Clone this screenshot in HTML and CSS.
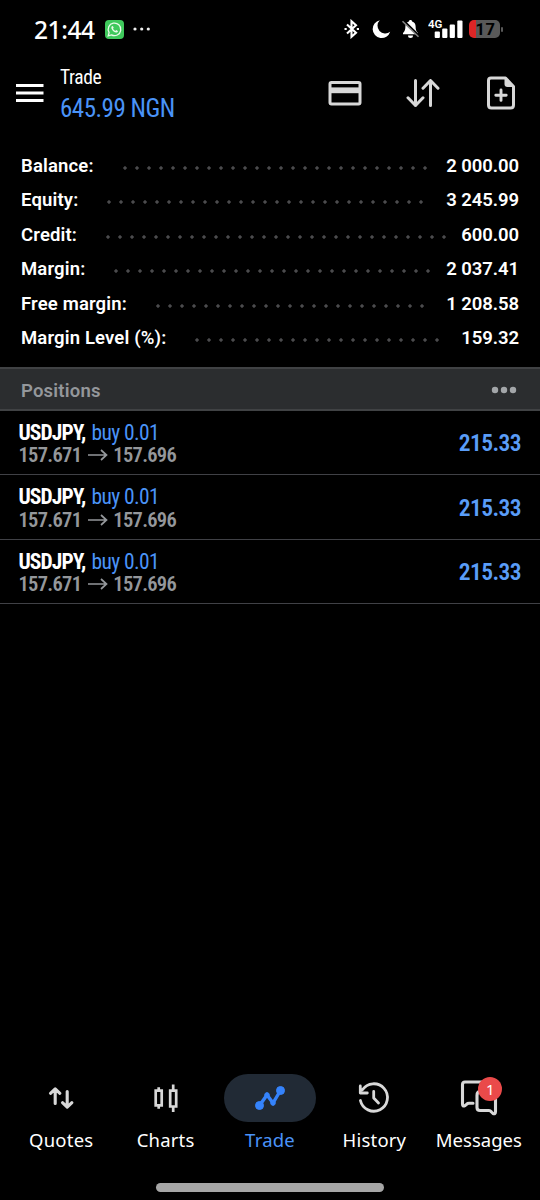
FILE: index.html
```html
<!DOCTYPE html>
<html lang="en">
<head>
    <meta charset="UTF-8">
    <meta name="viewport" content="width=device-width, initial-scale=1.0">
    <title>Trade</title>
    <link rel="stylesheet" href="styles.css">
</head>
<body>

    <div class="status-bar">
        <span class="time">21:44</span>
        <svg class="whatsapp" width="19" height="19" viewBox="0 0 19 19">
            <rect width="19" height="19" rx="4" fill="#3fc95c"/>
            <path d="M3.2 15.9l.9-3.3a6.3 6.3 0 1 1 2.4 2.3z" fill="none" stroke="#e9fbe9" stroke-width="1.3"/>
            <path d="M6.800 6.300q.8-.8 1.300.2l.6 1.300-.7.9q.8 1.500 2.300 2.200l.9-.8 1.300.6q.9.500.1 1.300-1.500 1.400-4.300-.8-3-2.800-1.500-4.900z" fill="#e9fbe9"/>
        </svg>
        <svg class="more" width="18" height="4" viewBox="0 0 18 4" fill="#eee">
            <circle cx="2" cy="2" r="1.600"/><circle cx="8.700" cy="2" r="1.600"/><circle cx="15.300" cy="2" r="1.600"/>
        </svg>
        <div class="status-icons">
            <svg width="16" height="20" viewBox="0 0 16 20" fill="none" stroke="#fff" stroke-width="2.100">
                <path d="M3 5.500l9 8.300-4.500 4V2.200l4.500 4-9 8.300"/>
                <path d="M.5 10h2.200M12.800 10H15"/>
            </svg>
            <svg width="19" height="20" viewBox="0 0 19 20">
                <path d="M7.800 1.200A9 9 0 1 0 18.200 12.800 7.800 7.800 0 0 1 7.800 1.200z" fill="#fff"/>
            </svg>
            <svg width="19" height="20" viewBox="0 0 19 20">
                <path d="M9.500 1c1 0 1.600.6 1.600 1.500 2.300.7 3.500 2.400 3.500 4.800 0 3.500.6 5 2.400 6.700v1.200H2V14c1.700-1.700 2.400-3.200 2.400-6.700 0-2.400 1.200-4.100 3.500-4.800C7.900 1.600 8.500 1 9.500 1zM7 16.500h5a2.500 2.500 0 0 1-5 0z" fill="#fff"/>
                <path d="M2.500 1.500l15.800 15.500" stroke="#000" stroke-width="2.200"/>
                <path d="M1.500 2.200l16 15.600" stroke="#888" stroke-width="1.500"/>
            </svg>
            <svg width="36" height="20" viewBox="0 0 36 20" fill="#fff">
                <text class="net" x="0" y="9">4G</text>
                <rect x="6.700" y="12.500" width="5.200" height="6.500" rx="1"/>
                <rect x="14.200" y="9.500" width="5.200" height="9.500" rx="1"/>
                <rect x="21.700" y="5.500" width="5.200" height="13.500" rx="1"/>
                <rect x="29.300" y="1.500" width="5.200" height="17.500" rx="1"/>
            </svg>
            <div class="battery"><span>17</span></div>
        </div>
    </div>

    <div class="header">
        <svg class="menu" width="28" height="20" viewBox="0 0 28 20" fill="#fff">
            <rect y="1" width="27.500" height="3"/><rect y="8.500" width="27.500" height="3"/><rect y="16" width="27.500" height="3"/>
        </svg>
        <div class="title">
            <span class="title-name condensed">Trade</span>
            <span class="title-sum condensed">645.99 NGN</span>
        </div>
        <div class="actions">
            <svg width="34" height="34" viewBox="0 0 34 34">
                <rect x="2" y="6.500" width="30" height="21.500" rx="1.500" fill="none" stroke="#d8d8d8" stroke-width="3"/>
                <path d="M2 14.300h30" stroke="#d8d8d8" stroke-width="5.800"/>
            </svg>
            <svg width="34" height="34" viewBox="0 0 34 34" fill="none" stroke="#d8d8d8" stroke-width="3" stroke-linecap="round" stroke-linejoin="round">
                <path d="M9.500 4.500v25M2 21.800l7.500 7.700 7.500-7.700M24.500 29.500v-25M17 12.200l7.500-7.700 7.500 7.700"/>
            </svg>
            <svg width="34" height="34" viewBox="0 0 34 34">
                <path d="M7 2h14.500l8 8.500v18.500q0 3-3 3H7.500q-3 0-3-3V4.500q0-2.500 2.500-2.500z" fill="none" stroke="#d8d8d8" stroke-width="3" stroke-linejoin="round"/>
                <path d="M20.500 1.500L30 11H23.500q-3 0-3-3z" fill="#d8d8d8"/>
                <path d="M17 14v10.400M11.800 19.200h10.400" stroke="#d8d8d8" stroke-width="2.900" stroke-linecap="round"/>
            </svg>
        </div>
    </div>

    <div class="summary">
        <div class="line"><span>Balance:</span><i class="dots" style="--n: 26"></i><b>2 000.00</b></div>
        <div class="line"><span>Equity:</span><i class="dots" style="--n: 27"></i><b>3 245.99</b></div>
        <div class="line"><span>Credit:</span><i class="dots" style="--n: 29"></i><b>600.00</b></div>
        <div class="line"><span>Margin:</span><i class="dots" style="--n: 27"></i><b>2 037.41</b></div>
        <div class="line"><span>Free margin:</span><i class="dots" style="--n: 23"></i><b>1 208.58</b></div>
        <div class="line"><span>Margin Level (%):</span><i class="dots" style="--n: 21"></i><b>159.32</b></div>
    </div>

    <div class="section">
        <span>Positions</span>
        <svg width="26" height="8" viewBox="0 0 26 8" fill="#a3a6a9">
            <circle cx="4" cy="4" r="3.200"/><circle cx="13" cy="4" r="3.200"/><circle cx="22" cy="4" r="3.200"/>
        </svg>
    </div>

    <div class="positions">
        <div class="position">
            <div class="deal">
                <div class="symbol"><b class="condensed">USDJPY,</b><span class="condensed">buy 0.01</span></div>
                <div class="prices">
                    <span class="condensed">157.671</span>
                    <svg width="20" height="12" viewBox="0 0 20 12" fill="none" stroke="#94979b" stroke-width="1.700"><path d="M0 6h18.500M13 1l5.500 5-5.500 5"/></svg>
                    <span class="condensed">157.696</span>
                </div>
            </div>
            <div class="profit condensed">215.33</div>
        </div>
        <div class="position">
            <div class="deal">
                <div class="symbol"><b class="condensed">USDJPY,</b><span class="condensed">buy 0.01</span></div>
                <div class="prices">
                    <span class="condensed">157.671</span>
                    <svg width="20" height="12" viewBox="0 0 20 12" fill="none" stroke="#94979b" stroke-width="1.700"><path d="M0 6h18.500M13 1l5.500 5-5.500 5"/></svg>
                    <span class="condensed">157.696</span>
                </div>
            </div>
            <div class="profit condensed">215.33</div>
        </div>
        <div class="position">
            <div class="deal">
                <div class="symbol"><b class="condensed">USDJPY,</b><span class="condensed">buy 0.01</span></div>
                <div class="prices">
                    <span class="condensed">157.671</span>
                    <svg width="20" height="12" viewBox="0 0 20 12" fill="none" stroke="#94979b" stroke-width="1.700"><path d="M0 6h18.500M13 1l5.500 5-5.500 5"/></svg>
                    <span class="condensed">157.696</span>
                </div>
            </div>
            <div class="profit condensed">215.33</div>
        </div>
    </div>

    <div class="nav">
        <div class="tab">
            <div class="tab-icon">
                <svg width="40" height="40" viewBox="0 0 40 40" fill="none" stroke="#d8d8d8" stroke-width="3.100" stroke-linecap="round" stroke-linejoin="round">
                    <path d="M14.200 25.500V11M9.500 15.300l4.700-4.500 4.700 4.500M26.200 13.500v15M21.500 24.700l4.700 4.500 4.700-4.500"/>
                </svg>
            </div>
            <span>Quotes</span>
        </div>
        <div class="tab">
            <div class="tab-icon">
                <svg width="40" height="40" viewBox="0 0 40 40" fill="none" stroke="#d8d8d8" stroke-width="2.700">
                    <path d="M9.700 12.700h6v14.600h-6zM12.700 9.300v3.400M12.700 27.300v3.400M24.200 12.700h6v15.800h-6zM27.200 6.500v6M27.200 28.500v5.500"/>
                </svg>
            </div>
            <span>Charts</span>
        </div>
        <div class="tab active">
            <div class="tab-icon">
                <svg width="40" height="40" viewBox="0 0 40 40" fill="#3583fb" stroke="#3583fb">
                    <path d="M9.500 27.500l7.500-10.500 6 8 7.500-12.500" fill="none" stroke-width="3.400"/>
                    <circle cx="9.500" cy="27.500" r="4"/><circle cx="17" cy="17" r="2.300"/><circle cx="23" cy="25" r="2.300"/><circle cx="30.500" cy="12.500" r="4"/>
                </svg>
            </div>
            <span>Trade</span>
        </div>
        <div class="tab">
            <div class="tab-icon">
                <svg width="40" height="40" viewBox="0 0 40 40" fill="none" stroke="#d8d8d8" stroke-width="2.800" stroke-linecap="round" stroke-linejoin="round">
                    <path d="M6.400 22.500a13.700 13.700 0 1 0 2-10.700M6.300 8v7h7M19.700 13.500v6.500l4.800 5"/>
                </svg>
            </div>
            <span>History</span>
        </div>
        <div class="tab">
            <div class="tab-icon">
                <svg width="40" height="40" viewBox="0 0 40 40" fill="none" stroke="#d8d8d8" stroke-width="3.100" stroke-linecap="round" stroke-linejoin="round">
                    <path d="M14 25.300h-4q-1.500 0-2.500 1l-1.500 1.300q-2.500 1.200-2.500-1.500V6.500q0-2.500 2.500-2.500h24"/>
                    <path d="M21 13.500h13.500q2 0 2 2v18q0 3-2.500 2l-1.500-1.500q-1.200-1.500-2.500-1.500h-9q-3 0-3-3V17.500q0-4 3-4z"/>
                </svg>
                <div class="badge">1</div>
            </div>
            <span>Messages</span>
        </div>
    </div>
    <div class="home-bar"></div>

</body>
</html>
```
FILE: styles.css
```css
* {
    box-sizing: border-box;
}

body {
    margin: 0;
    height: 1200px;
    background: #000;
    color: #fff;
    font-family: Roboto, "Liberation Sans", sans-serif;
    display: flex;
    flex-direction: column;
    overflow: hidden;
}

svg {
    display: block;
    flex: none;
}

.condensed {
    white-space: nowrap;
    font-stretch: 75%;
}

/* status bar */
.status-bar {
    height: 58px;
    padding-left: 34px;
    display: flex;
    align-items: center;
}

.time {
    font-family: "Noto Sans", sans-serif;
    font-size: 24.5px;
    font-weight: 500;
    letter-spacing: -0.4px;
    width: 71px;
}

.more {
    margin-left: 9px;
}

.status-icons {
    margin-left: auto;
    padding-right: 40px;
    display: flex;
    align-items: center;
}

.status-icons svg:nth-child(1) {
    margin-right: 12px;
}

.status-icons svg:nth-child(2) {
    margin-right: 10px;
}

.status-icons svg:nth-child(3) {
    margin-right: 8px;
}

.status-icons svg:nth-child(4) {
    margin-right: 5px;
}

.net {
    font-size: 11.5px;
    font-weight: 600;
}

.battery {
    position: relative;
    width: 31px;
    height: 18px;
    border-radius: 5px;
    background: linear-gradient(to right, #dc2626 7px, #595959 7px);
    color: #000;
    font-size: 16.5px;
    font-weight: 700;
    line-height: 19px;
    text-align: center;
    letter-spacing: 0.5px;
    padding-left: 2px;
}

.battery::after {
    content: "";
    position: absolute;
    right: -3px;
    top: 7px;
    width: 2px;
    height: 5px;
    border-radius: 1px;
    background: #595959;
}

/* header */
.header {
    height: 70px;
    padding: 0 22px 0 16px;
    display: flex;
    align-items: center;
}

.menu {
    margin-right: 16px;
}

.title {
    display: flex;
    flex-direction: column;
    align-items: flex-start;
    width: 150px;
    height: 58px;
}

.title-name {
    font-size: 19.5px;
    line-height: 27px;
    letter-spacing: -0.4px;
}

.title-sum {
    font-size: 25px;
    line-height: 35px;
    letter-spacing: -0.5px;
    color: #4a93f8;
}

.actions {
    margin-left: auto;
    display: flex;
    gap: 44px;
}

/* account summary */
.summary {
    padding: 20px 21px 0;
    height: 239px;
}

.line {
    height: 34.5px;
    padding-top: 0.5px;
    display: flex;
    align-items: center;
    font-size: 18.5px;
    font-weight: 600;
    letter-spacing: 0.15px;
    white-space: nowrap;
}

.line b {
    margin-left: auto;
    font-weight: 600;
    letter-spacing: -0.05px;
}

.dots {
    width: calc(var(--n) * 12px);
    height: 12px;
    margin: 4px 0 0 25px;
    background: radial-gradient(circle, #4b4b4d 1.300px, transparent 2.100px) 0 0 / 12px 12px;
}

/* positions */
.section {
    height: 44px;
    padding: 1px 23px 0 21px;
    display: flex;
    align-items: center;
    justify-content: space-between;
    background: #2b2d2f;
    border-top: 2px solid #404244;
    border-bottom: 2px solid #404244;
    color: #94979b;
    font-size: 18.5px;
    font-weight: 600;
    letter-spacing: 0.2px;
}

.section span {
    padding-top: 2px;
}

.position {
    height: 64.4px;
    padding: 1px 19px 0 18.5px;
    display: flex;
    align-items: center;
    justify-content: space-between;
    border-bottom: 1.5px solid #404146;
}

.deal {
    padding-top: 2px;
}

.symbol,
.prices {
    display: flex;
    align-items: center;
    height: 22.5px;
    line-height: 22px;
}

.symbol {
    font-size: 21.5px;
}

.symbol b {
    width: 73px;
    letter-spacing: -0.9px;
}

.symbol span {
    letter-spacing: -0.6px;
    color: #4a93f8;
}

.prices {
    color: #94979b;
    font-size: 20.5px;
    font-weight: 600;
    letter-spacing: -0.7px;
}

.prices svg {
    margin: 0 5.5px 0 6.5px;
}

.profit {
    color: #5a9df8;
    font-size: 23.5px;
    font-weight: 600;
    letter-spacing: -0.6px;
}

/* bottom navigation */
.nav {
    margin-top: auto;
    height: 109px;
    padding: 0 9px;
    display: flex;
}

.tab {
    flex: 1;
    display: flex;
    flex-direction: column;
    align-items: center;
    font-family: "Noto Sans", sans-serif;
    font-size: 18.5px;
    line-height: 36px;
    letter-spacing: 0.2px;
}

.tab:last-child {
    letter-spacing: 0;
}

.tab-icon {
    position: relative;
    width: 92px;
    height: 48px;
    border-radius: 24px;
    display: flex;
    align-items: center;
    justify-content: center;
}

.active {
    color: #4a93f8;
}

.active .tab-icon {
    background: #212a35;
}

.badge {
    position: absolute;
    left: 45.5px;
    top: 3px;
    width: 24px;
    height: 24px;
    border-radius: 50%;
    background: #ea4a4a;
    color: #fff;
    font-size: 15px;
    line-height: 24px;
    text-align: center;
}

.home-bar {
    width: 228px;
    height: 9px;
    margin: 0 auto 8px;
    border-radius: 5px;
    background: #a6a6a6;
}
```
